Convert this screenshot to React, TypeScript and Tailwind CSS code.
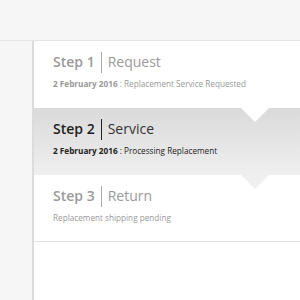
import React from 'react';

interface Step {
  num: number;
  title: string;
  date?: string;
  note: string;
  active?: boolean;
}

const steps: Step[] = [
  { num: 1, title: 'Request', date: '2 February 2016', note: 'Replacement Service Requested' },
  { num: 2, title: 'Service', date: '2 February 2016', note: 'Processing Replacement', active: true },
  { num: 3, title: 'Return', note: 'Replacement shipping pending' },
];

const zs = ['z-30', 'z-20', 'z-10'];

function StepRow({ step, idx, last }: { step: Step; idx: number; last: boolean }) {
  const active = !!step.active;
  return (
    <div
      className={
        'relative h-[67px] pl-[19px] pt-[10px] ' +
        zs[idx] +
        (active ? ' bg-gradient-to-b from-[#dadada] to-[#efefef]' : ' bg-white') +
        (last ? ' border-b border-[#e2e2e2]' : '')
      }
    >
      <div className="flex items-center h-[22px]">
        <span
          className={
            'text-[14px] font-semibold leading-none ' + (active ? 'text-[#1e1e1e]' : 'text-[#9a9a9a]')
          }
        >
          Step {step.num}
        </span>
        <span className={'mx-[6px] w-px h-[21px] ' + (active ? 'bg-[#222]' : 'bg-[#aaa]')} />
        <span className={'text-[14px] leading-none ' + (active ? 'text-[#333]' : 'text-[#9a9a9a]')}>
          {step.title}
        </span>
      </div>
      <div className={'mt-[7px] text-[8.2px] leading-none ' + (active ? 'text-[#222]' : 'text-[#999]')}>
        {step.date && <span className="font-bold">{step.date}</span>}
        {step.date && ' : '}
        {step.note}
      </div>
      {!last && (
        <div
          className={
            'absolute left-[207px] -bottom-[14px] w-0 h-0 border-l-[14px] border-r-[14px] border-t-[14px] border-l-transparent border-r-transparent ' +
            (active ? 'border-t-[#efefef]' : 'border-t-white')
          }
        />
      )}
    </div>
  );
}

export default function App() {
  return (
    <div
      className="w-[300px] h-[300px] bg-[#f6f6f7] overflow-hidden flex flex-col"
      style={{ fontFamily: '"Open Sans", "DejaVu Sans", sans-serif' }}
    >
      <div className="h-[41px] shrink-0 border-b border-[#e4e4e4]" />
      <div className="flex flex-1">
        <div className="w-[32px] shrink-0" />
        <div className="flex-1 bg-white border-l-2 border-[#dcdcdc] flex flex-col">
          {steps.map((s, i) => (
            <StepRow key={s.num} step={s} idx={i} last={i === steps.length - 1} />
          ))}
        </div>
      </div>
    </div>
  );
}
